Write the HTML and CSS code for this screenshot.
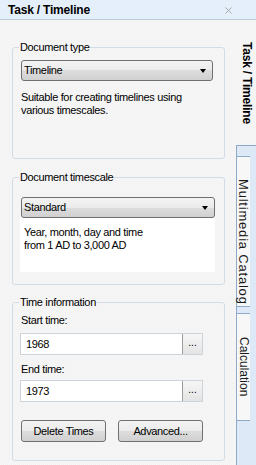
FILE: index.html
```html
<!DOCTYPE html>
<html>
<head>
<meta charset="utf-8">
<title>Task / Timeline</title>
<link rel="stylesheet" href="styles.css">
</head>
<body>
<div class="app">
  <div class="titlebar">
    <span class="title">Task / Timeline</span>
    <svg class="close" width="7" height="7" viewBox="0 0 7 7"><path d="M0.5 0.5L6.5 6.5M6.5 0.5L0.5 6.5" stroke="#a8a8a8" stroke-width="1"/></svg>
  </div>
  <div class="main">
    <div class="panel">
      <fieldset class="group g1">
        <legend>Document type</legend>
        <div class="select"><span>Timeline</span><i class="arrow"></i></div>
        <p class="desc">Suitable for creating timelines using<br>various timescales.</p>
      </fieldset>
      <fieldset class="group g2">
        <legend>Document timescale</legend>
        <div class="select wide"><span>Standard</span><i class="arrow"></i></div>
        <div class="info">Year, month, day and time<br>from 1 AD to 3,000 AD</div>
      </fieldset>
      <fieldset class="group g3">
        <legend>Time information</legend>
        <div class="label first">Start time:</div>
        <div class="field"><span class="value">1968</span><span class="dots">...</span></div>
        <div class="label second">End time:</div>
        <div class="field end"><span class="value">1973</span><span class="dots">...</span></div>
        <div class="buttons"><button class="btn">Delete Times</button><button class="btn">Advanced...</button></div>
      </fieldset>
    </div>
    <div class="tabs">
      <div class="tab active">Task / Timeline</div>
      <div class="rest">
        <div class="tab t2">Multimedia Catalog</div>
        <div class="tab t3">Calculation</div>
      </div>
    </div>
  </div>
</div>
</body>
</html>
```

FILE: styles.css
```css
html, body {
  margin: 0;
  padding: 0;
}
body {
  font-family: "Liberation Sans", Arial, sans-serif;
  font-size: 11px;
  line-height: 13px;
  color: #000;
  background: #f4f4f4;
}
.app {
  width: 256px;
  height: 465px;
  overflow: hidden;
}
.titlebar {
  height: 19px;
  box-sizing: border-box;
  padding: 2px 24px 0 8px;
  display: flex;
  align-items: center;
  justify-content: space-between;
  background: repeating-conic-gradient(#e1edf9 0 25%, #e8f1fb 0 50%) 0 0 / 2px 2px;
}
.title {
  font-weight: bold;
  font-size: 12px;
  letter-spacing: -0.2px;
}
.close {
  display: block;
  margin-top: -1px;
}
.main {
  display: flex;
  height: 446px;
}
.panel {
  width: 236px;
  box-sizing: border-box;
  border-top: 1px solid #bccddd;
  padding-top: 21px;
  background: repeating-conic-gradient(#f2f2f2 0 25%, #f7f7f7 0 50%) 0 0 / 2px 2px;
  letter-spacing: -0.35px;
}
.group {
  margin: 0 0 0 12px;
  width: 213px;
  box-sizing: border-box;
  border: 1px solid #d2dce6;
  border-radius: 3px;
  padding: 0 8px;
  min-inline-size: 0;
}
.group legend {
  padding: 0 1px;
  margin-left: -2px;
  line-height: 13px;
}
.g1 {
  padding-top: 6px;
  padding-bottom: 41px;
}
.g2 {
  margin-top: 12px;
  padding-top: 13px;
  padding-bottom: 12px;
}
.g3 {
  margin-top: 11px;
  padding-top: 5px;
  padding-bottom: 18px;
}
.select {
  width: 192px;
  height: 21px;
  box-sizing: border-box;
  border: 1px solid #707070;
  border-radius: 3px;
  background: linear-gradient(#f3f3f3, #ebebeb 50%, #dddddd 50%, #d0d0d0);
  display: flex;
  align-items: center;
  justify-content: space-between;
  padding: 0 6px 0 2px;
}
.select.wide {
  width: 194px;
}
.arrow {
  width: 0;
  height: 0;
  border-left: 3.5px solid transparent;
  border-right: 3.5px solid transparent;
  border-top: 4px solid #000;
}
.desc {
  margin: 10px 0 0 0;
}
.info {
  margin-left: -1px;
  width: 195px;
  height: 54px;
  box-sizing: border-box;
  background: #fff;
  padding: 8px 0 0 4px;
}
.label.second {
  margin-top: 8px;
}
.field {
  margin: 6px 0 0 -1px;
  width: 183px;
  height: 22px;
  box-sizing: border-box;
  border: 1px solid #ccd3db;
  background: #fff;
  display: flex;
}
.field.end {
  margin-top: 4px;
}
.value {
  flex: 1;
  padding-left: 5px;
  line-height: 20px;
}
.dots {
  width: 19px;
  border-left: 1px solid #9c9c9c;
  background: linear-gradient(#f6f6f6, #e4e4e4);
  text-align: center;
  font-size: 10px;
  line-height: 18px;
  letter-spacing: 0;
}
.buttons {
  margin-top: 18px;
  display: flex;
  gap: 12px;
}
.btn {
  width: 85px;
  height: 22px;
  box-sizing: border-box;
  margin: 0;
  padding: 0;
  border: 1px solid #707070;
  border-radius: 3px;
  background: linear-gradient(#f3f3f3, #ebebeb 50%, #dddddd 50%, #d0d0d0);
  font-family: "Liberation Sans", Arial, sans-serif;
  font-size: 11px;
  letter-spacing: -0.35px;
  color: #000;
}
.tabs {
  width: 20px;
  display: flex;
  flex-direction: column;
  background: #dde9f6;
}
.tab {
  writing-mode: vertical-rl;
  display: flex;
  align-items: center;
  justify-content: center;
  font-size: 12px;
  box-sizing: border-box;
  color: #1a1a1a;
}
.tab.active {
  height: 127px;
  font-weight: bold;
  letter-spacing: -0.2px;
  color: #000;
  border-top: 1px solid #bccddd;
  border-bottom: 1px solid #8fa9c9;
  background: repeating-conic-gradient(#f2f2f2 0 25%, #f7f7f7 0 50%) 0 0 / 2px 2px;
}
.rest {
  flex: 1;
  border-left: 1px solid #8fa9c9;
  padding-top: 10px;
}
.rest .tab {
  background: #f7f7f7;
  border-top: 1px solid #8fa9c9;
  border-bottom: 1px solid #8fa9c9;
}
.t2 {
  height: 151px;
  justify-content: flex-start;
  padding-top: 22px;
  font-size: 13px;
  letter-spacing: 0.8px;
}
.t3 {
  height: 108px;
  margin-top: 6px;
}
```
